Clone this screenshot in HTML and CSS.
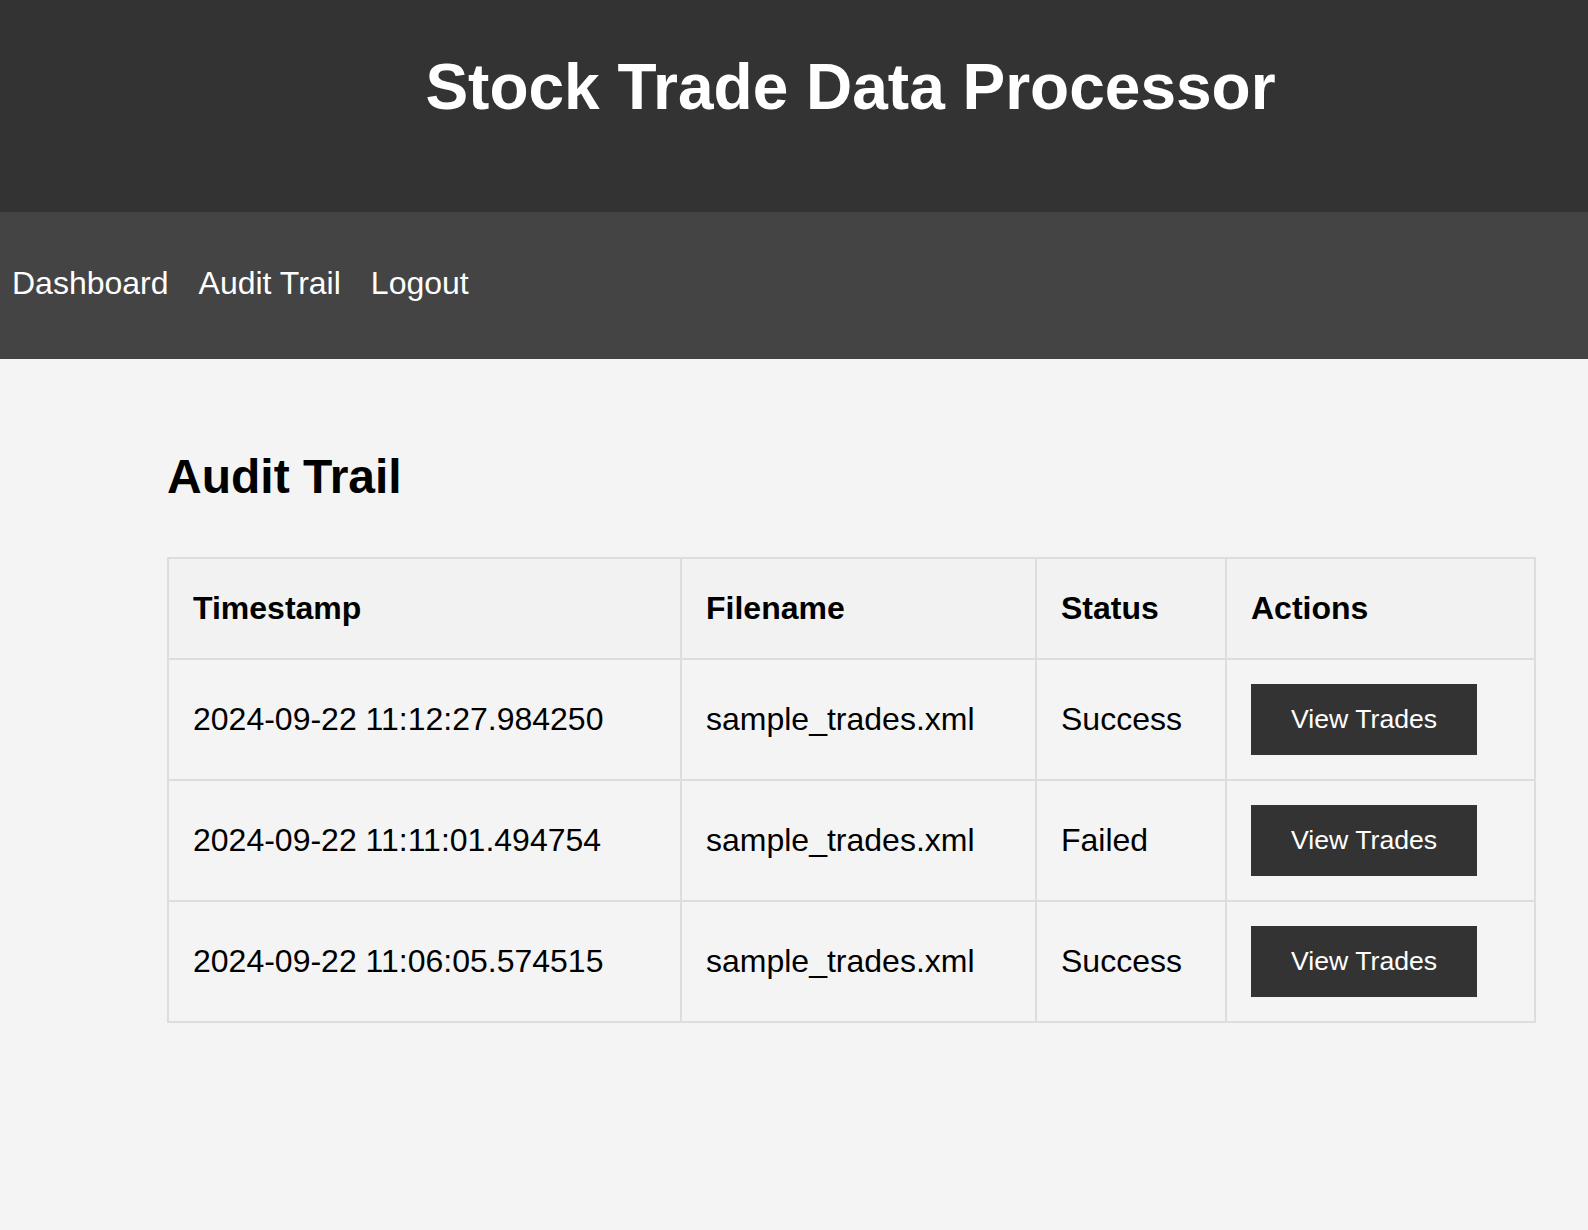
FILE: index.html
```html
<!DOCTYPE html>
<html lang="en">
<head>
<meta charset="utf-8">
<title>Audit Trail - Stock Trade Data Processor</title>
<link rel="stylesheet" href="styles.css">
</head>
<body>
<header class="site-header">
  <div class="container">
    <h1 class="site-title">Stock Trade Data Processor</h1>
  </div>
</header>
<nav class="site-nav">
  <a class="nav-link" href="#">Dashboard</a>
  <a class="nav-link" href="#">Audit Trail</a>
  <a class="nav-link" href="#">Logout</a>
</nav>
<main class="container main">
  <h2 class="page-title">Audit Trail</h2>
  <table class="audit-table">
    <colgroup>
      <col class="col-ts">
      <col class="col-file">
      <col class="col-status">
      <col class="col-actions">
    </colgroup>
    <thead>
      <tr>
        <th>Timestamp</th>
        <th>Filename</th>
        <th>Status</th>
        <th>Actions</th>
      </tr>
    </thead>
    <tbody>
      <tr>
        <td>2024-09-22 11:12:27.984250</td>
        <td>sample_trades.xml</td>
        <td>Success</td>
        <td><button class="btn" type="button">View Trades</button></td>
      </tr>
      <tr>
        <td>2024-09-22 11:11:01.494754</td>
        <td>sample_trades.xml</td>
        <td>Failed</td>
        <td><button class="btn" type="button">View Trades</button></td>
      </tr>
      <tr>
        <td>2024-09-22 11:06:05.574515</td>
        <td>sample_trades.xml</td>
        <td>Success</td>
        <td><button class="btn" type="button">View Trades</button></td>
      </tr>
    </tbody>
  </table>
</main>
</body>
</html>
```
FILE: styles.css
```css
html, body {
  margin: 0;
  padding: 0;
}

body {
  background: #f4f4f4;
  color: #000;
  font-family: "Liberation Sans", Arial, Helvetica, sans-serif;
  font-size: 32px;
}

.container {
  margin: 0 54px 0 167px;
}

.site-header {
  background: #333;
  color: #fff;
  padding: 50px 0 88px;
}

.site-title {
  margin: 0;
  font-size: 64px;
  line-height: 74px;
  font-weight: bold;
  text-align: center;
}

.site-nav {
  background: #444;
  display: flex;
  gap: 30px;
  padding: 53px 12px 57px;
}

.nav-link {
  color: #fff;
  text-decoration: none;
  font-size: 32px;
  line-height: 37px;
}

.main {
  padding-top: 90px;
  padding-bottom: 40px;
}

.page-title {
  margin: 0 0 53px;
  font-size: 48px;
  line-height: 55px;
  font-weight: bold;
}

.audit-table {
  width: 100%;
  border-collapse: collapse;
  table-layout: fixed;
}

.col-ts { width: 513px; }
.col-file { width: 355px; }
.col-status { width: 190px; }
.col-actions { width: 309px; }

.audit-table th,
.audit-table td {
  border: 2px solid #ddd;
  text-align: left;
  vertical-align: middle;
  font-size: 32px;
  line-height: 37px;
}

.audit-table th {
  background: #f2f2f2;
  font-weight: bold;
  padding: 31px 24px;
}

.audit-table td {
  padding: 24px;
}

.btn {
  display: inline-block;
  vertical-align: middle;
  background: #333;
  color: #fff;
  border: none;
  border-radius: 0;
  margin: 0;
  padding: 20px 40px;
  font-family: "Liberation Sans", Arial, Helvetica, sans-serif;
  font-size: 26.67px;
  line-height: 31px;
  cursor: pointer;
}
```
